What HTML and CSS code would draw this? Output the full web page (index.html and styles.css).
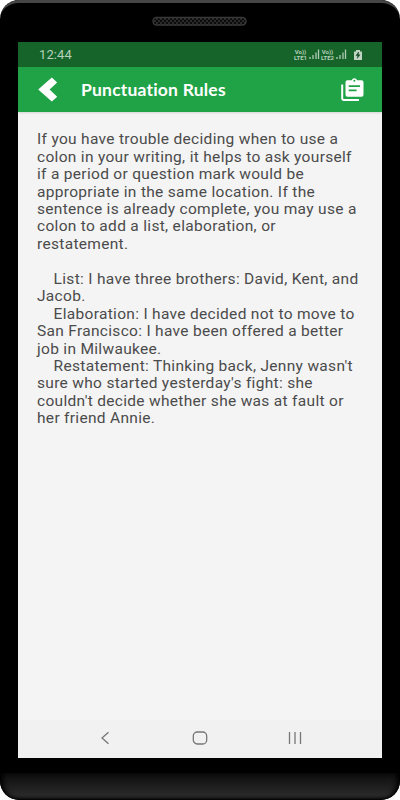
FILE: index.html
```html
<!DOCTYPE html>
<html lang="en">
<head>
<meta charset="utf-8">
<title>Punctuation Rules</title>
<link rel="stylesheet" href="styles.css">
</head>
<body>
<div class="phone">
  <div class="top-bezel">
    <svg class="speaker" width="96" height="10" viewBox="0 0 96 10">
      <defs><pattern id="mesh" width="4" height="4" patternUnits="userSpaceOnUse"><rect width="4" height="4" fill="#2b2b2b"/><circle cx="1" cy="1" r="1.1" fill="#050505"/><circle cx="3" cy="3" r="1.1" fill="#050505"/></pattern></defs>
      <rect x="1" y="1.5" width="93" height="7.5" rx="3.7" fill="url(#mesh)" stroke="#383838" stroke-width="1.4"/>
    </svg>
  </div>
  <div class="screen">
    <div class="status">
      <span class="time">12:44</span>
      <div class="indicators">
        <div class="volte"><span>Vo))</span><span>LTE1</span></div>
        <svg class="signal" width="11" height="11" viewBox="0 0 11 11"><path d="M1 10V8M4 10V6M7 10V3.5M9.5 10V.5" stroke="#aecbb5" stroke-width="1.3"/></svg>
        <div class="volte"><span>Vo))</span><span>LTE2</span></div>
        <svg class="signal" width="11" height="11" viewBox="0 0 11 11"><path d="M1 10V8M4 10V6M7 10V3.5M9.5 10V.5" stroke="#aecbb5" stroke-width="1.3"/></svg>
        <svg class="battery" width="8" height="10" viewBox="0 0 8 10"><path d="M0 1.5h2V0h4v1.5h2V10H0z" fill="#c0d4c4"/><path d="M4.6 2 2 5.5h1.8L3.3 8.3 6 4.8H4.3z" fill="#164a24" stroke="#164a24" stroke-width=".5"/></svg>
      </div>
    </div>
    <header class="appbar">
      <svg class="back" width="20" height="26" viewBox="0 0 20 26"><path d="M13.8.6 19.2 5.5 11.6 12.6 19.2 19.7 13.8 24.6.2 12.6z" fill="#fff"/></svg>
      <h1>Punctuation Rules</h1>
      <svg class="clipboard" width="24" height="24" viewBox="0 0 24 24"><path d="M1.2 6.5V20.6Q1.2 22 2.6 22H18" fill="none" stroke="#fff" stroke-width="2"/><path fill="#fff" fill-rule="evenodd" d="M6.5 2.2H10.8A2.7 2.7 0 0 1 16 2.2H20.5Q22.5 2.2 22.5 4.2V16.8Q22.5 18.8 20.5 18.8H6.5Q4.5 18.8 4.5 16.8V4.2Q4.5 2.2 6.5 2.2zM12.4 2.7a1 1 0 1 0 2 0a1 1 0 1 0-2 0zM7.7 7.3V9.1H19V7.3zM7.7 11.5V13.3H15.6V11.5z"/></svg>
    </header>
    <main>If you have trouble deciding when to use a
colon in your writing, it helps to ask yourself
if a period or question mark would be
appropriate in the same location. If the
sentence is already complete, you may use a
colon to add a list, elaboration, or
restatement.

    List: I have three brothers: David, Kent, and
Jacob.
    Elaboration: I have decided not to move to
San Francisco: I have been offered a better
job in Milwaukee.
    Restatement: Thinking back, Jenny wasn't
sure who started yesterday's fight: she
couldn't decide whether she was at fault or
her friend Annie.</main>
    <nav>
      <svg width="16" height="16" viewBox="0 0 16 16"><path d="M11.5 2.2 5 8l6.5 5.8"/></svg>
      <svg width="16" height="16" viewBox="0 0 16 16"><rect x="1.3" y="2" width="13.4" height="12" rx="4"/></svg>
      <svg width="16" height="16" viewBox="0 0 16 16"><path d="M2.5 2v12M8 2v12M13.5 2v12"/></svg>
    </nav>
  </div>
  <div class="chin"></div>
</div>
</body>
</html>
```
FILE: styles.css
```css
* { box-sizing: border-box; }
body { margin: 0; background: #fff; }
svg { display: block; flex: none; }
.phone {
  width: 400px;
  height: 800px;
  display: flex;
  flex-direction: column;
  background: #000;
  border-radius: 19px;
  overflow: hidden;
}
.top-bezel {
  height: 42px;
  padding-top: 13px;
  border-top: 3px solid #454545;
  border-radius: 19px 19px 0 0;
  display: flex;
  justify-content: center;
}
.screen {
  width: 364px;
  height: 716px;
  margin: 0 auto;
  display: flex;
  flex-direction: column;
  background: #f4f4f4;
}
.status {
  height: 25px;
  padding: 0 20px 0 21px;
  display: flex;
  align-items: center;
  justify-content: space-between;
  background: #17642b;
  color: #b4d0ba;
  font-family: Roboto, sans-serif;
}
.time { font-size: 13px; line-height: 25px; letter-spacing: .1px; }
.indicators { display: flex; align-items: center; }
.volte {
  width: 15px;
  display: flex;
  flex-direction: column;
  align-items: center;
  font-size: 6px;
  font-weight: 700;
  line-height: 5.5px;
}
.signal { margin-left: 1px; }
.battery { margin-left: 7px; }
.appbar {
  height: 45px;
  padding: 0 17px 0 20px;
  display: flex;
  align-items: center;
  background: #20a346;
  box-shadow: 0 1px 2px rgba(0, 0, 0, .12);
}
h1 {
  flex: 1;
  margin: 0 0 0 23px;
  color: #fff;
  font: 700 17.5px/22px Lato, sans-serif;
  font-variant-ligatures: none;
  letter-spacing: .2px;
}
main {
  flex: 1;
  padding: 19.3px 0 0 19px;
  white-space: pre;
  color: #4b4b4b;
  font: 400 15.5px/17.44px Roboto, sans-serif;
  letter-spacing: .31px;
}
nav {
  height: 38px;
  padding: 0 79px 2px;
  display: flex;
  align-items: center;
  justify-content: space-between;
  background: #f1f1f1;
  fill: none;
  stroke: #777;
  stroke-width: 1.3;
}
.chin {
  height: 27px;
  margin-top: 15px;
  background: linear-gradient(#0c0c0c, #292929 80%, #222 90%, #050505);
  border-radius: 0 0 19px 19px;
  box-shadow: inset 5px 0 5px -2px #000, inset -5px 0 5px -2px #000;
}
```
